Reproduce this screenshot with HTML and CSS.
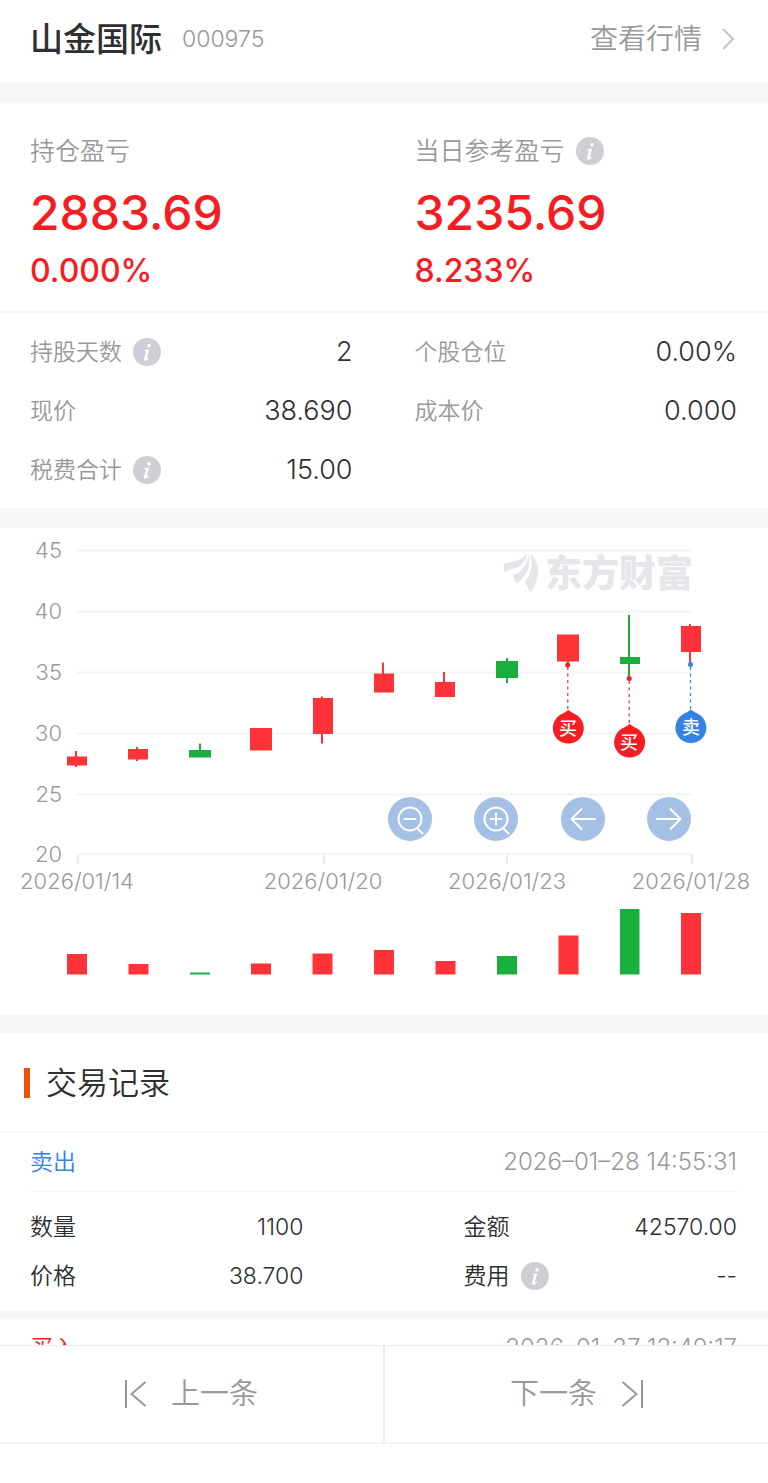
FILE: index.html
```html
<!DOCTYPE html>
<html lang="zh-CN">
<head>
<meta charset="utf-8">
<meta name="viewport" content="width=device-width, initial-scale=1">
<title>山金国际 000975</title>
<link rel="stylesheet" href="styles.css">
</head>
<body>
<svg class="defs" aria-hidden="true">
  <symbol id="info" viewBox="0 0 28 28">
    <circle cx="14" cy="14" r="14" fill="#cecfd4"/>
    <circle cx="16" cy="7.800" r="1.800" fill="#fff"/>
    <path d="M11.300 12.300 16.200 11.500 13.800 20.200C13.600 21.100 14.300 20.900 15.800 19.300L16.300 19.800C14.500 22.300 13 22.900 12 22.800 10.900 22.600 10.800 21.500 11.100 20.300L13.100 13.800C13.300 13.100 12.600 13 11.200 12.900Z" fill="#fff"/>
  </symbol>
</svg>
<main class="content">
  <header class="stock">
    <h1 class="stock-name">山金国际</h1>
    <span class="stock-code">000975</span>
    <a class="stock-link" href="#quote">查看行情
      <svg class="chevron" viewBox="0 0 12 22"><path d="M1 1 11 11 1 21" fill="none" stroke="#c6c6c8" stroke-width="2.200"/></svg>
    </a>
  </header>

  <section class="card">
    <div class="summary">
      <div>
        <div class="summary-label">持仓盈亏</div>
        <div class="summary-amount">2883.69</div>
        <div class="summary-rate">0.000%</div>
      </div>
      <div>
        <div class="summary-label">当日参考盈亏<button class="info" type="button" aria-label="当日参考盈亏说明"><svg><use href="#info"/></svg></button></div>
        <div class="summary-amount">3235.69</div>
        <div class="summary-rate">8.233%</div>
      </div>
    </div>
    <dl class="stats">
      <div class="pair"><dt>持股天数<button class="info" type="button" aria-label="持股天数说明"><svg><use href="#info"/></svg></button></dt><dd>2</dd></div>
      <div class="pair"><dt>个股仓位</dt><dd>0.00%</dd></div>
      <div class="pair"><dt>现价</dt><dd>38.690</dd></div>
      <div class="pair"><dt>成本价</dt><dd>0.000</dd></div>
      <div class="pair"><dt>税费合计<button class="info" type="button" aria-label="税费合计说明"><svg><use href="#info"/></svg></button></dt><dd>15.00</dd></div>
    </dl>
  </section>

  <section class="card chart">
    <svg class="chart-svg" viewBox="0 0 768 486" role="img" aria-label="K线图">
      <g stroke="#f4f4f5" stroke-width="2">
        <path d="M77 22.500H691M77 83.500H691M77 144.500H691M77 205.500H691M77 266.500H691M77 326H691"/>
        <path stroke="#ececee" d="M78 326V336M324 326V336M507 326V336M692 326V336"/>
      </g>
      <g fill="#e5e5ea">
        <g transform="translate(498 18) scale(.3333)">
          <path d="M18 55C34 46 62 50 88 23 86 50 62 66 36 70 28 72 24 76 21 81 17 72 17 62 18 55Z"/>
          <path d="M92 25C100 58 88 90 58 112 52 106 46 98 45 88 70 78 88 58 92 25Z"/>
          <path d="M97 23C128 48 128 98 98 139 91 128 84 118 81 106 98 88 106 58 97 23Z"/>
        </g>
        <text class="watermark" x="545" y="59">东方财富</text>
      </g>
      <g class="axis" text-anchor="end">
        <text x="62" y="30">45</text><text x="62" y="91">40</text><text x="62" y="152">35</text>
        <text x="62" y="213">30</text><text x="62" y="274">25</text><text x="62" y="334">20</text>
      </g>
      <g class="axis" text-anchor="middle">
        <text x="77" y="361">2026/01/14</text><text x="323" y="361">2026/01/20</text>
        <text x="507" y="361">2026/01/23</text><text x="691" y="361">2026/01/28</text>
      </g>
      <g fill="#fd3338">
        <path d="M67 228.500h20v9H67zM75 223h2v16h-2z"/>
        <path d="M128 221h20v10.500H128zM136 219h2v14h-2z"/>
        <path d="M250 200h22v22.500H250z"/>
        <path d="M313 170h20v36H313zM321 168.500h2v47h-2z"/>
        <path d="M374 145.500h20v19H374zM382 134.500h2v20h-2z"/>
        <path d="M435 154h20v15H435zM443 144h2v16h-2z"/>
        <path d="M557 106.500h22v27H557zM567 133h2v4H567z"/>
        <path d="M681 98h20v26H681zM689 96h2v40h-2z"/>
      </g>
      <g fill="#18af3d">
        <path d="M189 222h22v7.500H189zM199 215.500h2v8h-2z"/>
        <path d="M496 133h22v17H496zM506 130h2v25h-2z"/>
        <path d="M620 129h20v7H620zM628 87h2v63h-2z"/>
      </g>
      <g fill="#fd3338">
        <path d="M67 426h20v20.500H67zM128.500 436h20v10.500h-20zM251 435.500h20v11h-20zM312.500 425.500h20v21h-20zM374 422h20v24.500h-20zM435.500 433h20v13.500h-20zM558.500 407.500h20v39h-20zM681 385h20v61.500h-20z"/>
      </g>
      <path fill="#18af3d" d="M190 444.500h20v2h-20zM497 428h20v18.500h-20zM620 381h19.500v65.500H620z"/>
      <g fill="none" stroke="#d8333a" stroke-width="1.200" stroke-dasharray="3 3.500">
        <path d="M567.800 139V183"/><path d="M629.200 153V197"/><path stroke="#3a84df" d="M690.500 139V183"/>
      </g>
      <g fill="#f51c22">
        <circle cx="567.700" cy="137" r="2.500"/><circle cx="629.200" cy="150.500" r="2.500"/>
        <path d="M568.300 182C570.800 184.400 574.500 185.300 578 188A15.500 15.500 0 1 1 558.600 188C562.100 185.300 565.800 184.400 568.300 182Z"/>
        <path d="M629.600 196C632.100 198.400 635.800 199.300 639.300 202A15.500 15.500 0 1 1 619.900 202C623.400 199.300 627.100 198.400 629.600 196Z"/>
      </g>
      <g fill="#3482e2">
        <circle cx="690.500" cy="136.500" r="2.500"/>
        <path d="M690.900 181.500C693.400 183.900 697.100 184.800 700.600 187.500A15.500 15.500 0 1 1 681.200 187.500C684.700 184.800 688.400 183.900 690.900 181.500Z"/>
      </g>
      <g class="pin-text" text-anchor="middle"><text x="568" y="207">买</text><text x="629" y="221">买</text><text x="691" y="206">卖</text></g>
    </svg>
    <div class="chart-tools">
      <button class="tool" type="button" aria-label="缩小"><svg viewBox="0 0 44 44"><circle cx="22" cy="22" r="11.500"/><path d="M16.500 22h11M29.500 31.500 34.500 36.500"/></svg></button>
      <button class="tool" type="button" aria-label="放大"><svg viewBox="0 0 44 44"><circle cx="22" cy="22" r="11.500"/><path d="M16.500 22h11M22 16.500v11M29.500 31.500 34.500 36.500"/></svg></button>
      <button class="tool" type="button" aria-label="向左"><svg viewBox="0 0 44 44"><path d="M34 22H11M20.500 12 10.500 22 20.500 32"/></svg></button>
      <button class="tool" type="button" aria-label="向右"><svg viewBox="0 0 44 44"><path d="M10 22H33M23.500 12 33.500 22 23.500 32"/></svg></button>
    </div>
  </section>

  <section class="records">
    <h2 class="records-title">交易记录</h2>
    <article class="record">
      <div class="record-head"><span class="sell">卖出</span><time>2026–01–28 14:55:31</time></div>
      <dl class="record-body">
        <div class="pair"><dt>数量</dt><dd>1100</dd></div>
        <div class="pair"><dt>金额</dt><dd>42570.00</dd></div>
        <div class="pair"><dt>价格</dt><dd>38.700</dd></div>
        <div class="pair"><dt>费用<button class="info" type="button" aria-label="费用说明"><svg><use href="#info"/></svg></button></dt><dd>--</dd></div>
      </dl>
    </article>
    <article class="record">
      <div class="record-head"><span class="buy">买入</span><time>2026–01–27 13:49:17</time></div>
    </article>
  </section>
</main>
<nav class="pager">
  <button class="pager-btn" type="button"><svg class="pager-icon" viewBox="0 0 22 28"><path d="M1 0V28M20.500 2 6.500 14 20.500 26"/></svg>上一条</button>
  <button class="pager-btn" type="button">下一条<svg class="pager-icon" viewBox="0 0 22 28"><path d="M21 0V28M1.500 2 15.500 14 1.500 26"/></svg></button>
</nav>
</body>
</html>
```

FILE: styles.css
```css
* { box-sizing: border-box; margin: 0; padding: 0; }

body {
  display: flex;
  flex-direction: column;
  height: 100vh;
  background: #fff;
  color: #2f2f31;
  font-family: Inter, "Noto Sans CJK SC", sans-serif;
  font-weight: 350;
  line-height: 36px;
}

button { border: 0; background: none; font: inherit; color: inherit; cursor: pointer; }
svg { display: block; }
.defs { position: absolute; width: 0; height: 0; }

.content { flex: 1; min-height: 0; overflow: hidden; }

.stock {
  display: flex;
  align-items: center;
  height: 83px;
  padding: 0 34px 5px 30px;
}
.stock-name { font-size: 33px; font-weight: 500; }
.stock-code { margin-left: 20px; font-size: 23px; font-weight: 300; color: #999; }
.stock-link {
  display: flex;
  align-items: center;
  gap: 20px;
  margin-left: auto;
  font-size: 28px;
  color: #999;
  text-decoration: none;
}
.chevron { width: 12px; height: 22px; }

.card { border-top: 20px solid #f7f7f8; }

.summary {
  display: grid;
  grid-template-columns: 1fr 1fr;
  column-gap: 62px;
  padding: 30px 31px 20px 30px;
  border-bottom: 2px solid #f7f7f8;
}
.summary-label {
  display: flex;
  align-items: center;
  font-size: 25px;
  color: #999;
}
.summary-amount { margin-top: 12px; font-size: 48px; line-height: 64px; font-weight: 500; color: #f51c22; }
.summary-rate { margin-top: 6px; font-size: 32px; line-height: 40px; font-weight: 500; color: #f51c22; }

.info { width: 28px; height: 28px; margin-left: 11px; }
.info svg { width: 28px; height: 28px; }

.pair { display: flex; align-items: center; justify-content: space-between; }
.pair dt { display: flex; align-items: center; }

.stats {
  display: grid;
  grid-template-columns: 1fr 1fr;
  grid-auto-rows: 59px;
  column-gap: 62px;
  padding: 9px 31px 9px 30px;
}
.stats dt { font-size: 23px; color: #999; }
.stats dd { font-size: 27px; }

.chart { position: relative; }
.chart-svg { width: 100%; height: auto; }
.watermark { font-size: 37px; font-weight: 900; }
.axis { font-size: 22px; font-weight: 300; fill: #999; }
.pin-text { font-size: 18px; font-weight: 500; fill: #fff; }
.chart-tools {
  position: absolute;
  top: 55.400%;
  left: 50.500%;
  right: 10%;
  display: flex;
  justify-content: space-between;
}
.tool { width: 44px; height: 44px; border-radius: 50%; background: #a4c0e5; }
.tool svg { fill: none; stroke: #fff; stroke-width: 2; stroke-linecap: round; stroke-linejoin: round; }

.records { border-top: 20px solid #f7f7f8; }
.records-title {
  display: flex;
  align-items: center;
  gap: 16px;
  height: 97px;
  padding-left: 24px;
  font-size: 31px;
  font-weight: 350;
}
.records-title::before { content: ""; width: 6px; height: 30px; background: #ea5504; }

.record { border-top: 2px solid #f7f7f8; }
.record + .record { border-top-width: 9px; }
.record-head {
  display: flex;
  align-items: center;
  justify-content: space-between;
  height: 59px;
  margin: 0 31px 0 30px;
  border-bottom: 2px solid #f7f7f8;
  font-size: 23px;
}
.record-head time { font-size: 24px; font-weight: 300; color: #999; }
.sell { color: #3482e2; }
.buy { color: #f51c22; }
.record-body {
  display: grid;
  grid-template-columns: 1fr 1fr;
  grid-auto-rows: 49px;
  column-gap: 160px;
  padding: 10px 31px 10px 30px;
  font-size: 23px;
}

.pager {
  display: flex;
  margin-bottom: 39px;
  border-top: 1px solid #ebebec;
  border-bottom: 2px solid #f4f4f5;
  background: #fff;
}
.pager-btn {
  flex: 1;
  display: flex;
  align-items: center;
  justify-content: center;
  gap: 24px;
  height: 96px;
  font-size: 29px;
  color: #999;
}
.pager-btn + .pager-btn { border-left: 2px solid #ebebec; }
.pager-icon { width: 22px; height: 28px; fill: none; stroke: #999; stroke-width: 2; }
```
